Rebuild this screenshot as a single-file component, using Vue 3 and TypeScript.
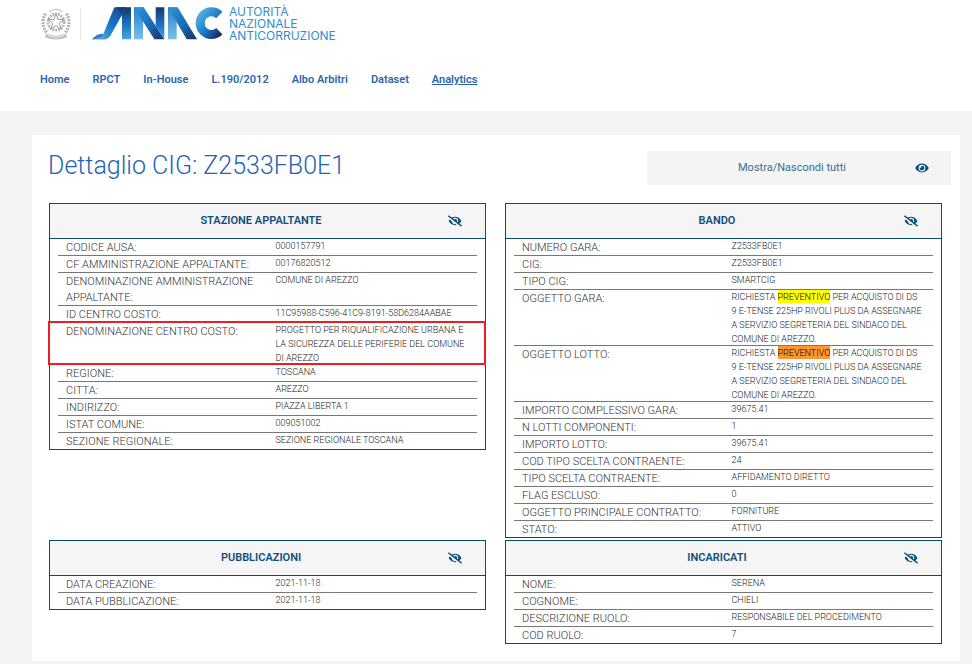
<script setup lang="ts">
import { computed, reactive } from 'vue'

interface Segment {
  text: string
  mark?: 'found' | 'current'
}
interface Row {
  label: string
  value: Segment[]
  boxed?: boolean
}
interface Card {
  id: string
  title: string
  open: boolean
  rows: Row[]
}

const row = (label: string, value: string, boxed = false): Row => ({ label, value: [{ text: value }], boxed })

const purchase = (mark: 'found' | 'current'): Segment[] => [
  { text: 'RICHIESTA ' },
  { text: 'PREVENTIVO', mark },
  { text: ' PER ACQUISTO DI DS\n9 E-TENSE 225HP RIVOLI PLUS DA ASSEGNARE\nA SERVIZIO SEGRETERIA DEL SINDACO DEL\nCOMUNE DI AREZZO.' },
]

const links = ['Home', 'RPCT', 'In-House', 'L.190/2012', 'Albo Arbitri', 'Dataset', 'Analytics']

const cards = reactive<Card[]>([
  {
    id: 'stazione',
    title: 'STAZIONE APPALTANTE',
    open: true,
    rows: [
      row('CODICE AUSA:', '0000157791'),
      row('CF AMMINISTRAZIONE APPALTANTE:', '00176820512'),
      row('DENOMINAZIONE AMMINISTRAZIONE APPALTANTE:', 'COMUNE DI AREZZO'),
      row('ID CENTRO COSTO:', '11C95988-C596-41C9-8191-58D6284AABAE'),
      row('DENOMINAZIONE CENTRO COSTO:', 'PROGETTO PER RIQUALIFICAZIONE URBANA E\nLA SICUREZZA DELLE PERIFERIE DEL COMUNE\nDI AREZZO', true),
      row('REGIONE:', 'TOSCANA'),
      row('CITTA:', 'AREZZO'),
      row('INDIRIZZO:', 'PIAZZA LIBERTA 1'),
      row('ISTAT COMUNE:', '009051002'),
      row('SEZIONE REGIONALE:', 'SEZIONE REGIONALE TOSCANA'),
    ],
  },
  {
    id: 'bando',
    title: 'BANDO',
    open: true,
    rows: [
      row('NUMERO GARA:', 'Z2533FB0E1'),
      row('CIG:', 'Z2533FB0E1'),
      row('TIPO CIG:', 'SMARTCIG'),
      { label: 'OGGETTO GARA:', value: purchase('found') },
      { label: 'OGGETTO LOTTO:', value: purchase('current') },
      row('IMPORTO COMPLESSIVO GARA:', '39675.41'),
      row('N LOTTI COMPONENTI:', '1'),
      row('IMPORTO LOTTO:', '39675.41'),
      row('COD TIPO SCELTA CONTRAENTE:', '24'),
      row('TIPO SCELTA CONTRAENTE:', 'AFFIDAMENTO DIRETTO'),
      row('FLAG ESCLUSO:', '0'),
      row('OGGETTO PRINCIPALE CONTRATTO:', 'FORNITURE'),
      row('STATO:', 'ATTIVO'),
    ],
  },
  {
    id: 'pubblicazioni',
    title: 'PUBBLICAZIONI',
    open: true,
    rows: [row('DATA CREAZIONE:', '2021-11-18'), row('DATA PUBBLICAZIONE:', '2021-11-18')],
  },
  {
    id: 'incaricati',
    title: 'INCARICATI',
    open: true,
    rows: [
      row('NOME:', 'SERENA'),
      row('COGNOME:', 'CHIELI'),
      row('DESCRIZIONE RUOLO:', 'RESPONSABILE DEL PROCEDIMENTO'),
      row('COD RUOLO:', '7'),
    ],
  },
])

const allOpen = computed(() => cards.every((c) => c.open))
function toggleAll() {
  const next = !allOpen.value
  cards.forEach((c) => (c.open = next))
}
</script>

<template>
  <header class="top">
    <div class="brand">
      <svg class="emblem" viewBox="0 0 32 36" aria-hidden="true">
        <g fill="none" stroke="#b4b4b4">
          <circle cx="16" cy="16" r="8.5" stroke-width="3" stroke-dasharray="2 1" />
          <path d="M5 7Q-1 17 6 27M27 7q6 10-1 20" stroke-width="3.5" stroke-dasharray="2 1.2" />
          <path d="M5 30q11 5 22 0" stroke="#bdbdbd" stroke-width="4" />
          <path d="M7 30q9 4 18 0" stroke="#eee" stroke-width="1" />
          <path d="M9 5q7-5 14 0" stroke="#c4c4c4" stroke-width="1.5" />
        </g>
        <path d="M16 7l2.2 6.2h6.6l-5.3 4 2 6.4-5.500-3.800-5.500 3.800 2-6.400-5.300-4h6.600z" fill="#fafafa" stroke="#999" stroke-width="1" />
      </svg>
      <span class="rule"></span>
      <svg class="mark" viewBox="0 0 414 132" role="img" aria-label="ANAC">
        <defs>
          <linearGradient id="leg" x1="1" y1="0" x2="0" y2="1"><stop offset="0" stop-color="#1b3e8c" /><stop offset=".5" stop-color="#1479c8" /><stop offset="1" stop-color="#68b4e6" /></linearGradient>
          <linearGradient id="post" x1="0" y1="0" x2="0" y2="1"><stop offset="0" stop-color="#1d3470" /><stop offset=".5" stop-color="#1970bc" /><stop offset="1" stop-color="#48a5df" /></linearGradient>
          <linearGradient id="pale" x1="0" y1="0" x2="0" y2="1"><stop offset="0" stop-color="#2681c9" /><stop offset="1" stop-color="#7bc0eb" /></linearGradient>
          <linearGradient id="deep" x1="0" y1="0" x2="1" y2="1"><stop offset="0" stop-color="#3097dc" /><stop offset=".55" stop-color="#176cb7" /><stop offset="1" stop-color="#1c2c69" /></linearGradient>
          <linearGradient id="bow" x1="0" y1="0" x2="1" y2="1"><stop offset="0" stop-color="#56afe6" /><stop offset=".6" stop-color="#1776c2" /><stop offset="1" stop-color="#1d2b68" /></linearGradient>
        </defs>
        <path d="M8 112Q24 96 37 95Q49 95 48 112z" fill="#287fc5" />
        <path d="M76 16H112L64 101Q57 112 44 112H8Q35 111 44 94z" fill="url(#leg)" />
        <path d="M84 16H126V112H99V42z" fill="url(#post)" />
        <path d="M135 16H162V112H135z" fill="url(#pale)" />
        <path d="M135 16H164L226 112H196z" fill="url(#deep)" />
        <path d="M200 16H226V112L200 72z" fill="url(#post)" />
        <path d="M237 16H263V112H237z" fill="url(#pale)" />
        <path d="M237 16H266L324 112H293z" fill="url(#deep)" />
        <path d="M391 39A34 34 0 1 0 391 88" fill="none" stroke="url(#bow)" stroke-width="27" />
      </svg>
      <p class="agency">AUTORITÀ<br />NAZIONALE<br />ANTICORRUZIONE</p>
    </div>
    <nav class="menu">
      <a v-for="link in links" :key="link" href="#" :class="{ active: link === 'Analytics' }">{{ link }}</a>
    </nav>
  </header>

  <main class="panel">
    <div class="heading">
      <h1>Dettaglio CIG: Z2533FB0E1</h1>
      <button class="toggle-all" type="button" @click="toggleAll">
        <span>Mostra/Nascondi tutti</span>
        <svg class="eye" viewBox="0 0 576 512" aria-hidden="true">
          <path d="M572.5 241.400C518.300 135.600 410.900 64 288 64S57.700 135.600 3.500 241.400a32.400 32.400 0 0 0 0 29.200C57.700 376.400 165.100 448 288 448s230.300-71.600 284.500-177.400a32.400 32.400 0 0 0 0-29.200zM288 400a144 144 0 1 1 144-144 143.900 143.900 0 0 1-144 144zm0-240a95.300 95.300 0 0 0-25.300 3.800 47.900 47.900 0 0 1-66.900 66.900A95.800 95.800 0 1 0 288 160z" />
        </svg>
      </button>
    </div>

    <div class="cards">
      <section v-for="card in cards" :key="card.id" class="card">
        <header class="card-head" :class="{ closed: !card.open }">
          <h2>{{ card.title }}</h2>
          <button type="button" class="hide" :aria-label="'Mostra/Nascondi ' + card.title" @click="card.open = !card.open">
            <svg class="eye" viewBox="0 0 640 512" aria-hidden="true">
              <path d="M320 400c-75.900 0-137.300-58.700-142.900-133.100L72.200 185.800c-13.800 17.300-26.500 35.600-36.700 55.600a32.400 32.400 0 0 0 0 29.200C89.700 376.400 197.100 448 320 448c26.900 0 52.900-4 77.900-10.500L346 397.400a144.100 144.100 0 0 1-26 2.600zm313.800 58.100l-110.500-85.400a331.300 331.300 0 0 0 81.200-102.100 32.400 32.400 0 0 0 0-29.200C550.300 135.600 442.900 64 320 64a308.200 308.200 0 0 0-147.300 37.700L45.500 3.400A16 16 0 0 0 23 6.200L3.400 31.500A16 16 0 0 0 6.200 53.900l588.400 454.700a16 16 0 0 0 22.400-2.800l19.700-25.300a16 16 0 0 0-2.900-22.400zM450.100 316.500l-39.300-30.400A94.800 94.800 0 0 0 416 256a94.800 94.800 0 0 0-121.300-92.200A47.700 47.700 0 0 1 304 192a46.600 46.600 0 0 1-1.500 10l-73.600-56.900A142.300 142.300 0 0 1 320 112a143.900 143.900 0 0 1 144 144c0 21.600-5.300 41.800-13.900 60.500z" />
            </svg>
          </button>
        </header>
        <dl v-if="card.open">
          <div v-for="item in card.rows" :key="item.label" class="row" :class="{ boxed: item.boxed }">
            <dt>{{ item.label }}</dt>
            <dd><template v-for="(part, i) in item.value" :key="i"><mark v-if="part.mark" :class="part.mark">{{ part.text }}</mark><template v-else>{{ part.text }}</template></template></dd>
          </div>
        </dl>
      </section>
    </div>
  </main>
</template>

<style>
body {
  background: #f4f4f4;
  font-family: Roboto, 'Liberation Sans', sans-serif;
}
</style>

<style scoped>
.top {
  background: #fff;
  padding: 4px 40px 23px;
}
.brand {
  display: flex;
  align-items: center;
  height: 40px;
}
.emblem {
  width: 32px;
  height: 34px;
}
.rule {
  width: 1px;
  height: 32px;
  margin: 0 8px;
  background: #e8e8e8;
}
.mark {
  width: 138px;
  height: 44px;
}
.agency {
  margin: 0 0 0 2px;
  font: 400 12px/12px Inter, 'Liberation Sans', sans-serif;
  color: #2f8fd0;
}
.menu {
  display: flex;
  gap: 23px;
  padding-top: 28px;
}
.menu a {
  font-size: 11px;
  font-weight: 600;
  line-height: 16px;
  color: #2b66b0;
  text-decoration: none;
}
.menu a.active {
  text-decoration: underline;
}
.panel {
  margin: 24px 12px 0 32px;
  padding: 16px 18px 17px 17px;
  background: #fff;
}
.heading {
  display: flex;
  justify-content: space-between;
  align-items: flex-start;
  margin: 0 -9px 18px -1px;
}
h1 {
  margin: 0;
  font-size: 25px;
  font-weight: 300;
  line-height: 30px;
  color: #1f62b8;
}
.toggle-all {
  display: flex;
  align-items: center;
  flex: 0 0 304px;
  height: 34px;
  padding: 0 22px;
  border: 0;
  background: #f4f4f4;
  color: #3a6d90;
  font: 400 11px/16px Roboto, 'Liberation Sans', sans-serif;
  cursor: pointer;
}
.toggle-all span {
  flex: 1;
  text-align: center;
}
.eye {
  display: block;
  width: 14px;
  height: 12px;
  fill: #0b4f7d;
}
.cards {
  display: grid;
  grid-template-columns: 1fr 1fr;
  align-items: start;
  gap: 2px 19px;
}
.card {
  border: 1px solid #0a4a6e;
}
.card-head {
  display: flex;
  align-items: center;
  height: 34px;
  padding: 0 23px 0 24px;
  border-bottom: 1px solid #0a4a6e;
  background: #f5f5f5;
}
.card-head.closed {
  border-bottom: 0;
}
h2 {
  flex: 1;
  margin: 0;
  font-size: 11px;
  font-weight: 600;
  line-height: 16px;
  text-align: center;
  color: #0f4f79;
}
.hide {
  padding: 0;
  border: 0;
  background: none;
  cursor: pointer;
}
dl {
  margin: 0;
  padding: 0 8px;
}
.row {
  position: relative;
  display: grid;
  grid-template-columns: 1fr 1fr;
  border-bottom: 1px solid #777;
}
.row:last-child {
  border-bottom: 0;
}
.row.boxed::after {
  content: '';
  position: absolute;
  inset: -2px -9px -1px -10px;
  border: 2px solid #ee1c25;
  pointer-events: none;
}
dt {
  margin-bottom: -1px;
  padding: 1px 8px 0;
  font-size: 11px;
  font-weight: 300;
  line-height: 16px;
  color: #333;
}
dd {
  margin: 0 0 -1px;
  padding: 0 0 0 8px;
  font-size: 9px;
  font-weight: 300;
  line-height: 14px;
  white-space: pre-line;
  color: #222;
}
mark {
  padding: 2px 0 1px;
  color: #000;
}
mark.found {
  background: #ff0;
}
mark.current {
  background: #ff9632;
}
</style>
